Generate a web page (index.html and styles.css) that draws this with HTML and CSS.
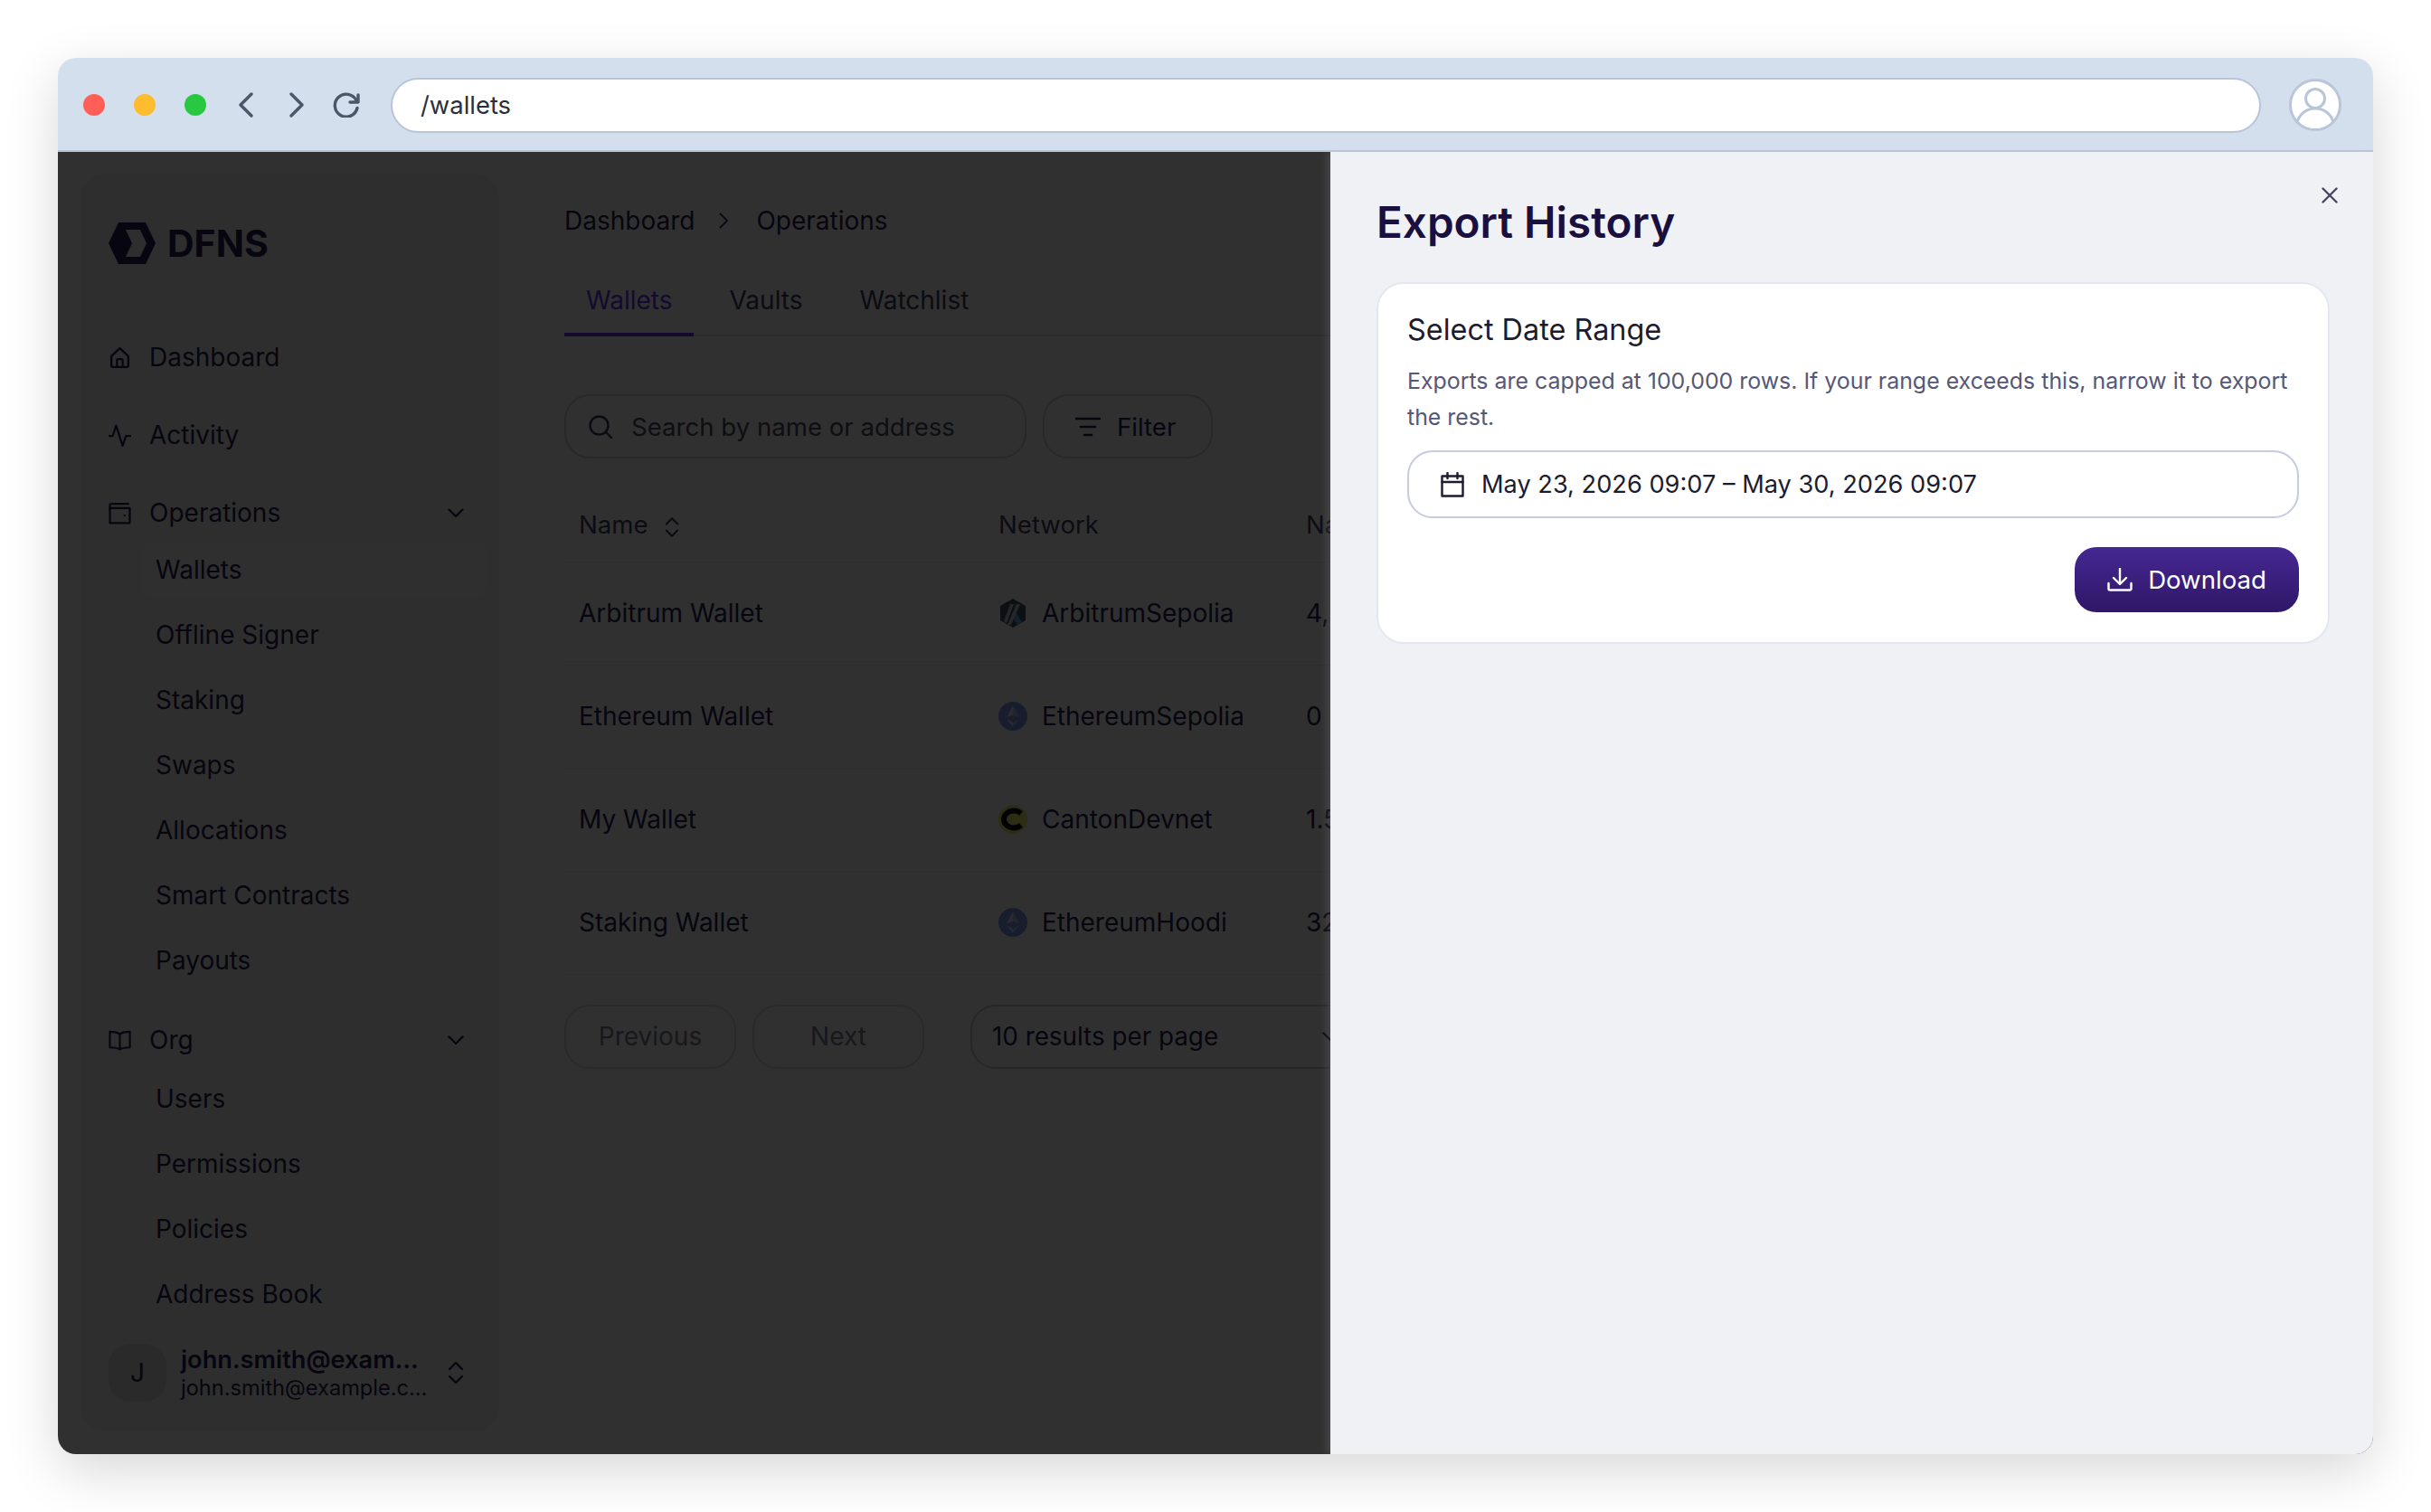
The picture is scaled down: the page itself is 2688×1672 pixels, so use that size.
FILE: index.html
```html
<!DOCTYPE html>
<html lang="en">
  <head>
    <meta charset="UTF-8" />
    <title>Export History</title>
    <link rel="stylesheet" href="styles.css" />
  </head>
  <body>
    <div class="window">
      <header class="toolbar">
        <div class="dots">
          <span class="dot dot-red"></span>
          <span class="dot dot-yellow"></span>
          <span class="dot dot-green"></span>
        </div>
        <svg class="tool tool-back" viewBox="0 0 16 28"><path d="M14 2 2 14l12 12" /></svg>
        <svg class="tool tool-forward" viewBox="0 0 16 28"><path d="M2 2l12 12L2 26" /></svg>
        <svg class="tool tool-reload" viewBox="0 0 30 28"><path d="M26 9a12.5 12.5 0 1 0 1 8.500" /><path d="M28 3v8h-9" /></svg>
        <div class="address">/wallets</div>
        <svg class="profile" viewBox="0 0 58 58">
          <circle cx="29" cy="29" r="27.500" />
          <circle cx="29" cy="22" r="10.500" />
          <path d="M9 48c3-10 11-15 20-15s17 5 20 15" />
        </svg>
      </header>

      <div class="app">
        <aside class="sidebar">
          <div class="logo">
            <svg class="logo-mark" viewBox="0 0 52 46">
              <path d="M11 0h30l11 23-11 23H11L0 23z" />
              <path class="logo-cut" d="M19 8h16l7 15-7 15H19l7-15z" />
            </svg>
            <span class="logo-text">DFNS</span>
          </div>

          <nav class="nav">
            <a class="nav-item">
              <svg class="nav-icon" viewBox="0 0 24 24"><path d="M3 10.500 12 2l9 8.500v10a1.500 1.500 0 0 1-1.500 1.500h-15A1.500 1.500 0 0 1 3 20.500z" /><path d="M9 22v-7.500a1 1 0 0 1 1-1h4a1 1 0 0 1 1 1V22" /></svg>
              Dashboard
            </a>
            <a class="nav-item">
              <svg class="nav-icon" viewBox="0 0 24 24"><path d="M1 12.500h3.500L8 1.500 15 23l3.500-10.500H24" /></svg>
              Activity
            </a>
            <div class="nav-group">
              <a class="nav-item">
                <svg class="nav-icon" viewBox="0 0 24 24"><path d="M3 2h18" /><path d="M1.500 6.500h21v16h-21z" /><path d="M1.500 2.500v6" /><path d="M17 14.500h.1" /></svg>
                Operations
                <svg class="nav-chevron" viewBox="0 0 18 10"><path d="M1.500 1.500 9 9l7.500-7.500" /></svg>
              </a>
              <div class="subnav">
                <a class="sub-item active">Wallets</a>
                <a class="sub-item">Offline Signer</a>
                <a class="sub-item">Staking</a>
                <a class="sub-item">Swaps</a>
                <a class="sub-item">Allocations</a>
                <a class="sub-item">Smart Contracts</a>
                <a class="sub-item">Payouts</a>
              </div>
            </div>
            <div class="nav-group nav-group-org">
              <a class="nav-item">
                <svg class="nav-icon" viewBox="0 0 26 24"><path d="M13 5c-2-2-5-3-11.500-3v18c6 0 9.500 .5 11.500 2.500C15 20.500 18.500 20 24.500 20V2C18 2 15 3 13 5z" /><path d="M13 5v17" /></svg>
                Org
                <svg class="nav-chevron" viewBox="0 0 18 10"><path d="M1.500 1.500 9 9l7.500-7.500" /></svg>
              </a>
              <div class="subnav">
                <a class="sub-item">Users</a>
                <a class="sub-item">Permissions</a>
                <a class="sub-item">Policies</a>
                <a class="sub-item">Address Book</a>
              </div>
            </div>
          </nav>

          <div class="user">
            <div class="user-avatar">J</div>
            <div class="user-info">
              <div class="user-name">john.smith@exam…</div>
              <div class="user-email">john.smith@example.c…</div>
            </div>
            <svg class="user-switch" viewBox="0 0 18 26"><path d="M2 9l7-7 7 7" /><path d="M2 17l7 7 7-7" /></svg>
          </div>
        </aside>

        <main class="main">
          <div class="breadcrumb">
            <span>Dashboard</span>
            <svg class="crumb-sep" viewBox="0 0 10 18"><path d="M1.500 1.500 9 9l-7.500 7.500" /></svg>
            <span>Operations</span>
          </div>

          <div class="tabs">
            <a class="tab tab-active">Wallets</a>
            <a class="tab">Vaults</a>
            <a class="tab">Watchlist</a>
          </div>

          <div class="filters">
            <div class="search">
              <svg class="search-icon" viewBox="0 0 28 26"><circle cx="12.500" cy="11.500" r="10" /><path d="m20 19 6 6" /></svg>
              Search by name or address
            </div>
            <button class="filter-btn">
              <svg class="filter-icon" viewBox="0 0 28 22"><path d="M1 2h26" /><path d="M6 11h16" /><path d="M10 20h8" /></svg>
              Filter
            </button>
          </div>

          <table class="wallets">
            <thead>
              <tr>
                <th class="col-name">
                  Name
                  <svg class="sort-icon" viewBox="0 0 18 26"><path d="M2 9l7-7 7 7" /><path d="M2 17l7 7 7-7" /></svg>
                </th>
                <th class="col-network">Network</th>
                <th>Native Balance</th>
              </tr>
            </thead>
            <tbody>
              <tr>
                <td>Arbitrum Wallet</td>
                <td>
                  <div class="network">
                    <svg class="net-icon" viewBox="0 0 32 32">
                      <path fill="#3a5568" d="M16 0 30 8v16l-14 8-14-8V8z" />
                      <path fill="#5fb0f0" d="M18 13l8 13-5 3-7-12z" />
                      <path fill="#cfcfcf" d="M13 6h4L9 27l-3-2zM20 6h4L14 29h-4z" />
                    </svg>
                    ArbitrumSepolia
                  </div>
                </td>
                <td>4,215.08</td>
              </tr>
              <tr>
                <td>Ethereum Wallet</td>
                <td>
                  <div class="network">
                    <svg class="net-icon" viewBox="0 0 32 32">
                      <circle cx="16" cy="16" r="16" fill="#7f9cf5" />
                      <path fill="#d8def8" d="M16 4v11l-7 2z" />
                      <path fill="#b8c4f4" d="M16 4v11l7 2z" />
                      <path fill="#d8def8" d="M9 19l7 9v-5z" />
                      <path fill="#b8c4f4" d="M23 19l-7 9v-5z" />
                    </svg>
                    EthereumSepolia
                  </div>
                </td>
                <td>0</td>
              </tr>
              <tr>
                <td>My Wallet</td>
                <td>
                  <div class="network">
                    <svg class="net-icon" viewBox="0 0 32 32">
                      <circle cx="16" cy="16" r="16" fill="#e8ee6a" />
                      <path class="canton-c" d="M25 9.500a11 9.500 0 1 0 0 13" />
                    </svg>
                    CantonDevnet
                  </div>
                </td>
                <td>1.5</td>
              </tr>
              <tr>
                <td>Staking Wallet</td>
                <td>
                  <div class="network">
                    <svg class="net-icon" viewBox="0 0 32 32">
                      <circle cx="16" cy="16" r="16" fill="#7f9cf5" />
                      <path fill="#d8def8" d="M16 4v11l-7 2z" />
                      <path fill="#b8c4f4" d="M16 4v11l7 2z" />
                      <path fill="#d8def8" d="M9 19l7 9v-5z" />
                      <path fill="#b8c4f4" d="M23 19l-7 9v-5z" />
                    </svg>
                    EthereumHoodi
                  </div>
                </td>
                <td>32</td>
              </tr>
            </tbody>
          </table>

          <div class="pagination">
            <button class="page-btn">Previous</button>
            <button class="page-btn">Next</button>
            <div class="per-page">
              10 results per page
              <svg class="per-page-chevron" viewBox="0 0 18 10"><path d="M1.500 1.500 9 9l7.500-7.500" /></svg>
            </div>
          </div>
        </main>

        <div class="backdrop"></div>

        <section class="panel">
          <svg class="panel-close" viewBox="0 0 18 18"><path d="M1.500 1.500l15 15M16.500 1.500l-15 15" /></svg>
          <h1 class="panel-title">Export History</h1>
          <div class="card">
            <h2 class="card-title">Select Date Range</h2>
            <p class="card-text">Exports are capped at 100,000 rows. If your range exceeds this, narrow it to export the rest.</p>
            <div class="date-input">
              <svg class="date-icon" viewBox="0 0 26 28"><path d="M1.500 4.500h23v22h-23z" /><path d="M1.500 11h23" /><path d="M7.500 1v6M18.500 1v6" /></svg>
              May 23, 2026 09:07 – May 30, 2026 09:07
            </div>
            <div class="card-actions">
              <button class="download-btn">
                <svg class="download-icon" viewBox="0 0 28 26"><path d="M14 1v16" /><path d="m7 11 7 7 7-7" /><path d="M1.500 17v6a1.500 1.500 0 0 0 1.500 1.500h22a1.500 1.500 0 0 0 1.500-1.500v-6" /></svg>
                Download
              </button>
            </div>
          </div>
        </section>
      </div>
    </div>
  </body>
</html>
```

FILE: styles.css
```css
* {
  margin: 0;
  padding: 0;
  box-sizing: border-box;
}

body {
  width: 2688px;
  height: 1672px;
  padding: 64px;
  background: #fff;
  font-family: "Inter", "Liberation Sans", sans-serif;
  font-size: 28px;
  color: #262254;
  overflow: hidden;
}

svg {
  display: block;
  flex-shrink: 0;
  fill: none;
  stroke-linecap: round;
  stroke-linejoin: round;
}

/* Browser window */
.window {
  display: flex;
  flex-direction: column;
  height: 100%;
  border-radius: 20px;
  background: #fff;
  box-shadow: 0 18px 60px rgba(0, 0, 0, 0.16);
  overflow: hidden;
}

.toolbar {
  display: flex;
  align-items: center;
  flex-shrink: 0;
  height: 104px;
  padding: 2px 35px 0 28px;
  background: #d4dfed;
  border-bottom: 2px solid #b8c4d8;
}

.dots {
  display: flex;
  gap: 32px;
}

.dot {
  width: 24px;
  height: 24px;
  border-radius: 50%;
}

.dot-red { background: #ff5f57; }
.dot-yellow { background: #febc2e; }
.dot-green { background: #28c840; }

.tool {
  height: 28px;
  stroke: #4b5768;
  stroke-width: 3.4;
}

.tool-back { width: 16px; margin-left: 36px; }
.tool-forward { width: 16px; margin-left: 40px; }
.tool-reload { width: 30px; margin-left: 32px; }

.address {
  flex: 1;
  height: 61px;
  margin-left: 34px;
  padding-left: 31px;
  font-size: 27.4px;
  line-height: 57px;
  background: #fff;
  border: 2px solid #b8c4d8;
  border-radius: 31px;
  color: #2a2f3c;
}

.profile {
  width: 58px;
  height: 58px;
  margin-left: 31px;
  fill: #fff;
  stroke: #b9c5d9;
  stroke-width: 3;
}

/* App behind the drawer */
.app {
  position: relative;
  display: flex;
  flex: 1;
  min-height: 0;
  padding: 24px 0 25px 25px;
}

.sidebar {
  display: flex;
  flex-direction: column;
  flex-shrink: 0;
  width: 463px;
  padding: 54px 39px 33px 31px;
  background: #f3f3f3;
  border-radius: 28px;
}

.logo {
  display: flex;
  align-items: center;
  gap: 13px;
  height: 46px;
  margin-bottom: 71px;
}

.logo-mark {
  width: 52px;
  height: 46px;
  fill: #262254;
}

.logo-cut {
  fill: #f3f3f3;
}

.logo-text {
  font-size: 41px;
  font-weight: 700;
  color: #262254;
}

.nav {
  display: flex;
  flex-direction: column;
  gap: 22px;
}

.nav-item {
  display: flex;
  align-items: center;
  height: 64px;
}

.nav-icon {
  width: 25px;
  height: 25px;
  margin-right: 20px;
  stroke: #262254;
  stroke-width: 2.2;
}

.nav-chevron {
  width: 18px;
  height: 10px;
  margin-left: auto;
  stroke: #262254;
  stroke-width: 2.4;
}

.nav-group-org {
  margin-top: 2px;
}

.nav-group-org .subnav {
  margin-top: 2px;
}

.subnav {
  display: flex;
  flex-direction: column;
  gap: 9px;
  margin: 0 -25px 0 36px;
}

.sub-item {
  height: 63px;
  padding-left: 16px;
  line-height: 63px;
  border-radius: 14px;
}

.sub-item.active {
  background: #f6f6f7;
}

.user {
  display: flex;
  align-items: center;
  margin-top: auto;
}

.user-avatar {
  flex-shrink: 0;
  width: 64px;
  height: 64px;
  line-height: 64px;
  text-align: center;
  background: #dcdce2;
  border-radius: 24px;
}

.user-info {
  margin-left: 16px;
  white-space: nowrap;
}

.user-name {
  font-size: 27.2px;
  font-weight: 600;
  line-height: 33px;
}

.user-email {
  font-size: 23.6px;
  line-height: 30px;
}

.user-switch {
  width: 18px;
  height: 26px;
  margin-left: auto;
  stroke: #262254;
  stroke-width: 2.4;
}

/* Main column */
.main {
  flex: 1;
  min-width: 0;
  margin: -24px 64px 0 72px;
  padding-top: 56px;
}

.breadcrumb {
  display: flex;
  align-items: center;
  height: 40px;
}

.crumb-sep {
  width: 10px;
  height: 18px;
  margin: 0 31px 0 27px;
  stroke: #36326a;
  stroke-width: 1.800;
}

.tabs {
  display: flex;
  gap: 15px;
  height: 80px;
  margin-top: 28px;
  border-bottom: 2px solid #e8e8ee;
}

.tab {
  height: 80px;
  padding: 0 24px;
  line-height: 80px;
  color: #3e3b66;
}

.tab-active {
  color: #6e32ff;
  border-bottom: 4px solid #6e32ff;
}

.filters {
  display: flex;
  gap: 18px;
  margin-top: 64px;
}

.search,
.filter-btn {
  display: flex;
  align-items: center;
  height: 71px;
  border: 2px solid #d2d2de;
  border-radius: 28px;
  background: none;
  font: inherit;
}

.search {
  width: 511px;
  padding-left: 24px;
  font-size: 27.6px;
  color: #4c4a64;
}

.search-icon {
  width: 28px;
  height: 26px;
  margin-right: 20px;
  stroke: #3a3860;
  stroke-width: 2.4;
}

.filter-btn {
  width: 188px;
  padding-left: 34px;
  font-size: 27.6px;
  color: #262254;
}

.filter-icon {
  width: 28px;
  height: 22px;
  margin-right: 18px;
  stroke: #262254;
  stroke-width: 2.6;
}

.wallets {
  width: 100%;
  margin-top: 33px;
  table-layout: fixed;
  border-collapse: collapse;
}

.wallets th,
.wallets td {
  padding: 0 16px;
  text-align: left;
  white-space: nowrap;
  border-bottom: 1px solid #f0f0f2;
}

.wallets th {
  height: 81px;
  font-size: 27.6px;
  font-weight: 400;
  color: #44415f;
}

.wallets td {
  height: 114px;
}

.col-name { width: 464px; }
.col-network { width: 340px; }

.sort-icon {
  display: inline-block;
  width: 16px;
  height: 24px;
  margin-left: 11px;
  vertical-align: middle;
  stroke: #3a3860;
  stroke-width: 2.4;
}

.network {
  display: flex;
  align-items: center;
  gap: 16px;
}

.net-icon {
  width: 32px;
  height: 32px;
}

.canton-c {
  stroke: #111;
  stroke-width: 6;
  stroke-linecap: butt;
}

.pagination {
  display: flex;
  gap: 18px;
  margin-top: 33px;
}

.page-btn {
  width: 190px;
  height: 71px;
  border: 2px solid #dededf;
  border-radius: 28px;
  background: none;
  font: inherit;
  color: #807e90;
}

.per-page {
  display: flex;
  align-items: center;
  width: 427px;
  height: 71px;
  margin-left: 33px;
  padding: 0 18px 0 22px;
  font-size: 27.8px;
  border: 2px solid #c8c8d6;
  border-radius: 28px;
}

.per-page-chevron {
  width: 18px;
  height: 10px;
  margin-left: auto;
  stroke: #262254;
  stroke-width: 2.4;
}

/* Export drawer */
.backdrop {
  position: absolute;
  top: 0;
  right: 0;
  bottom: 0;
  left: 0;
  background: rgba(0, 0, 0, 0.81);
}

.panel {
  position: absolute;
  top: 0;
  right: 0;
  bottom: 0;
  width: 1153px;
  padding: 49px 48px 0 51px;
  background: #f0f1f5;
  box-shadow: -3px 0 10px rgba(210, 210, 230, 0.18);
}

.panel-close {
  position: absolute;
  top: 39px;
  right: 39px;
  width: 18px;
  height: 18px;
  stroke: #4a4560;
  stroke-width: 2.4;
}

.panel-title {
  height: 58px;
  font-size: 47.6px;
  font-weight: 600;
  line-height: 58px;
  color: #1a1040;
}

.card {
  margin-top: 37px;
  padding: 31px 32px 33px;
  background: #fff;
  border: 2px solid #e4e6f0;
  border-radius: 30px;
}

.card-title {
  font-size: 32.4px;
  font-weight: 400;
  line-height: 40px;
  color: #1c1c2e;
}

.card-text {
  margin-top: 17px;
  font-size: 24.9px;
  line-height: 39.500px;
  color: #565876;
}

.date-input {
  display: flex;
  align-items: center;
  height: 75px;
  margin-top: 17px;
  padding-left: 35px;
  font-size: 27.2px;
  color: #1c1c2e;
  border: 2px solid #c6cbe0;
  border-radius: 28px;
}

.date-icon {
  width: 26px;
  height: 28px;
  margin-right: 19px;
  stroke: #1c1c2e;
  stroke-width: 2.4;
}

.card-actions {
  display: flex;
  justify-content: flex-end;
  margin-top: 32px;
}

.download-btn {
  display: flex;
  align-items: center;
  justify-content: center;
  gap: 17px;
  width: 248px;
  height: 72px;
  border: none;
  border-radius: 24px;
  background: linear-gradient(#452792, #2f1768);
  font: inherit;
  font-size: 27.6px;
  color: #fff;
}

.download-icon {
  width: 28px;
  height: 26px;
  stroke: #fff;
  stroke-width: 2.4;
}
```
